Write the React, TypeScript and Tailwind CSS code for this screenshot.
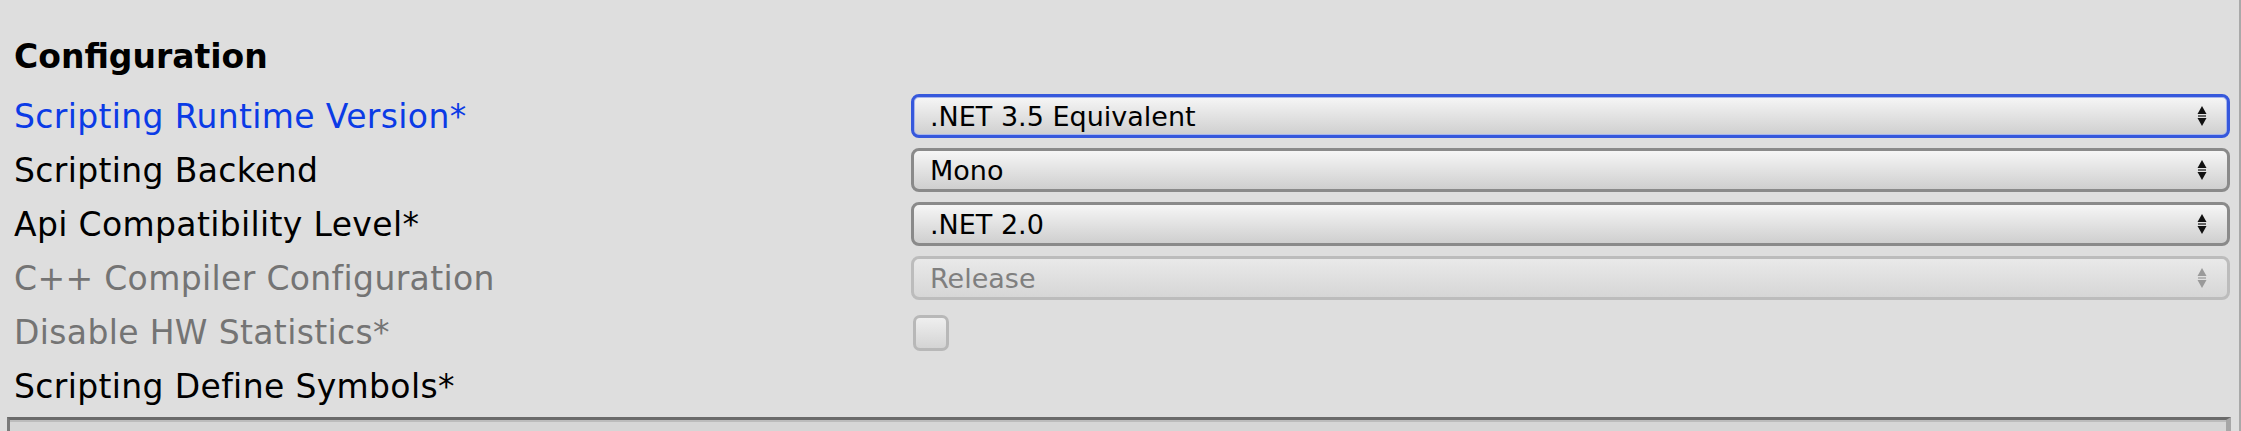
import React from 'react'

type Row =
  | { kind: 'popup'; label: string; value: string; tone?: 'blue' | 'disabled'; focused?: boolean }
  | { kind: 'toggle'; label: string; tone?: 'blue' | 'disabled' }
  | { kind: 'plain'; label: string }

const rows: Row[] = [
  { kind: 'popup', label: 'Scripting Runtime Version*', value: '.NET 3.5 Equivalent', tone: 'blue', focused: true },
  { kind: 'popup', label: 'Scripting Backend', value: 'Mono' },
  { kind: 'popup', label: 'Api Compatibility Level*', value: '.NET 2.0' },
  { kind: 'popup', label: 'C++ Compiler Configuration', value: 'Release', tone: 'disabled' },
  { kind: 'toggle', label: 'Disable HW Statistics*', tone: 'disabled' },
  { kind: 'plain', label: 'Scripting Define Symbols*' },
]

function Arrows({ disabled }: { disabled?: boolean }) {
  const fill = disabled ? '#9a9a9a' : '#111111'
  return (
    <svg width="10" height="20" viewBox="0 0 10 20" className="shrink-0">
      <polygon points="5,0 9.5,8 0.5,8" fill={fill} />
      <rect x="1" y="9" width="8" height="2" fill={fill} opacity="0.6" />
      <polygon points="0.5,12 9.5,12 5,20" fill={fill} />
    </svg>
  )
}

function Popup({ value, focused, disabled }: { value: string; focused?: boolean; disabled?: boolean }) {
  const frame = focused
    ? 'border-[3px] border-[#3658dc] shadow-[inset_0_0_0_1px_#a7b5ec] bg-gradient-to-b from-[#f6f6f6] to-[#cfcfcf] text-black'
    : disabled
      ? 'border-[3px] border-[#bcbcbc] bg-gradient-to-b from-[#e9e9e9] to-[#d6d6d6] text-[#7f7f7f]'
      : 'border-[3px] border-[#8a8a8a] bg-gradient-to-b from-[#f6f6f6] to-[#cfcfcf] text-black'
  return (
    <div className={`flex h-[44px] flex-1 items-center justify-between rounded-[8px] pl-[16px] pr-[20px] text-[27px] ${frame}`}>
      <span className="leading-none">{value}</span>
      <Arrows disabled={disabled} />
    </div>
  )
}

export default function App() {
  return (
    <div
      className="h-[431px] w-[2241px] overflow-hidden border-r-[2px] border-[#a9a9a9] bg-[#dedede]"
      style={{ fontFamily: '"DejaVu Sans", Verdana, sans-serif' }}
    >
      <div className="pt-[30px]">
        <div className="h-[59px] pl-[14px] text-[33px] font-bold leading-[54px] text-black">Configuration</div>

        {rows.map((row) => {
          const color =
            'tone' in row && row.tone === 'blue'
              ? 'text-[#0b3be6]'
              : 'tone' in row && row.tone === 'disabled'
                ? 'text-[#747474]'
                : 'text-black'
          return (
            <div key={row.label} className="flex h-[54px] items-center pl-[14px] pr-[9px]">
              <div className={`w-[897px] shrink-0 pt-[2px] text-[33px] leading-[52px] tracking-[0.35px] ${color}`}>
                {row.label}
              </div>
              {row.kind === 'popup' && (
                <Popup value={row.value} focused={row.focused} disabled={row.tone === 'disabled'} />
              )}
              {row.kind === 'toggle' && (
                <div className="ml-[2px] mt-[2px] h-[36px] w-[36px] rounded-[7px] border-[3px] border-[#b8b8b8] bg-gradient-to-b from-[#efefef] to-[#d4d4d4]" />
              )}
            </div>
          )
        })}

        {/* define symbols text field, cut off at the bottom */}
        <div className="ml-[7px] mr-[8px] mt-[4px] h-[40px] border-l-[3px] border-r-[5px] border-t-[3px] border-l-[#7a7a7a] border-r-[#a6a6a6] border-t-[#6a6a6a] bg-[#d6d6d6] shadow-[inset_0_2px_0_#bcbcbc]" />
      </div>
    </div>
  )
}
